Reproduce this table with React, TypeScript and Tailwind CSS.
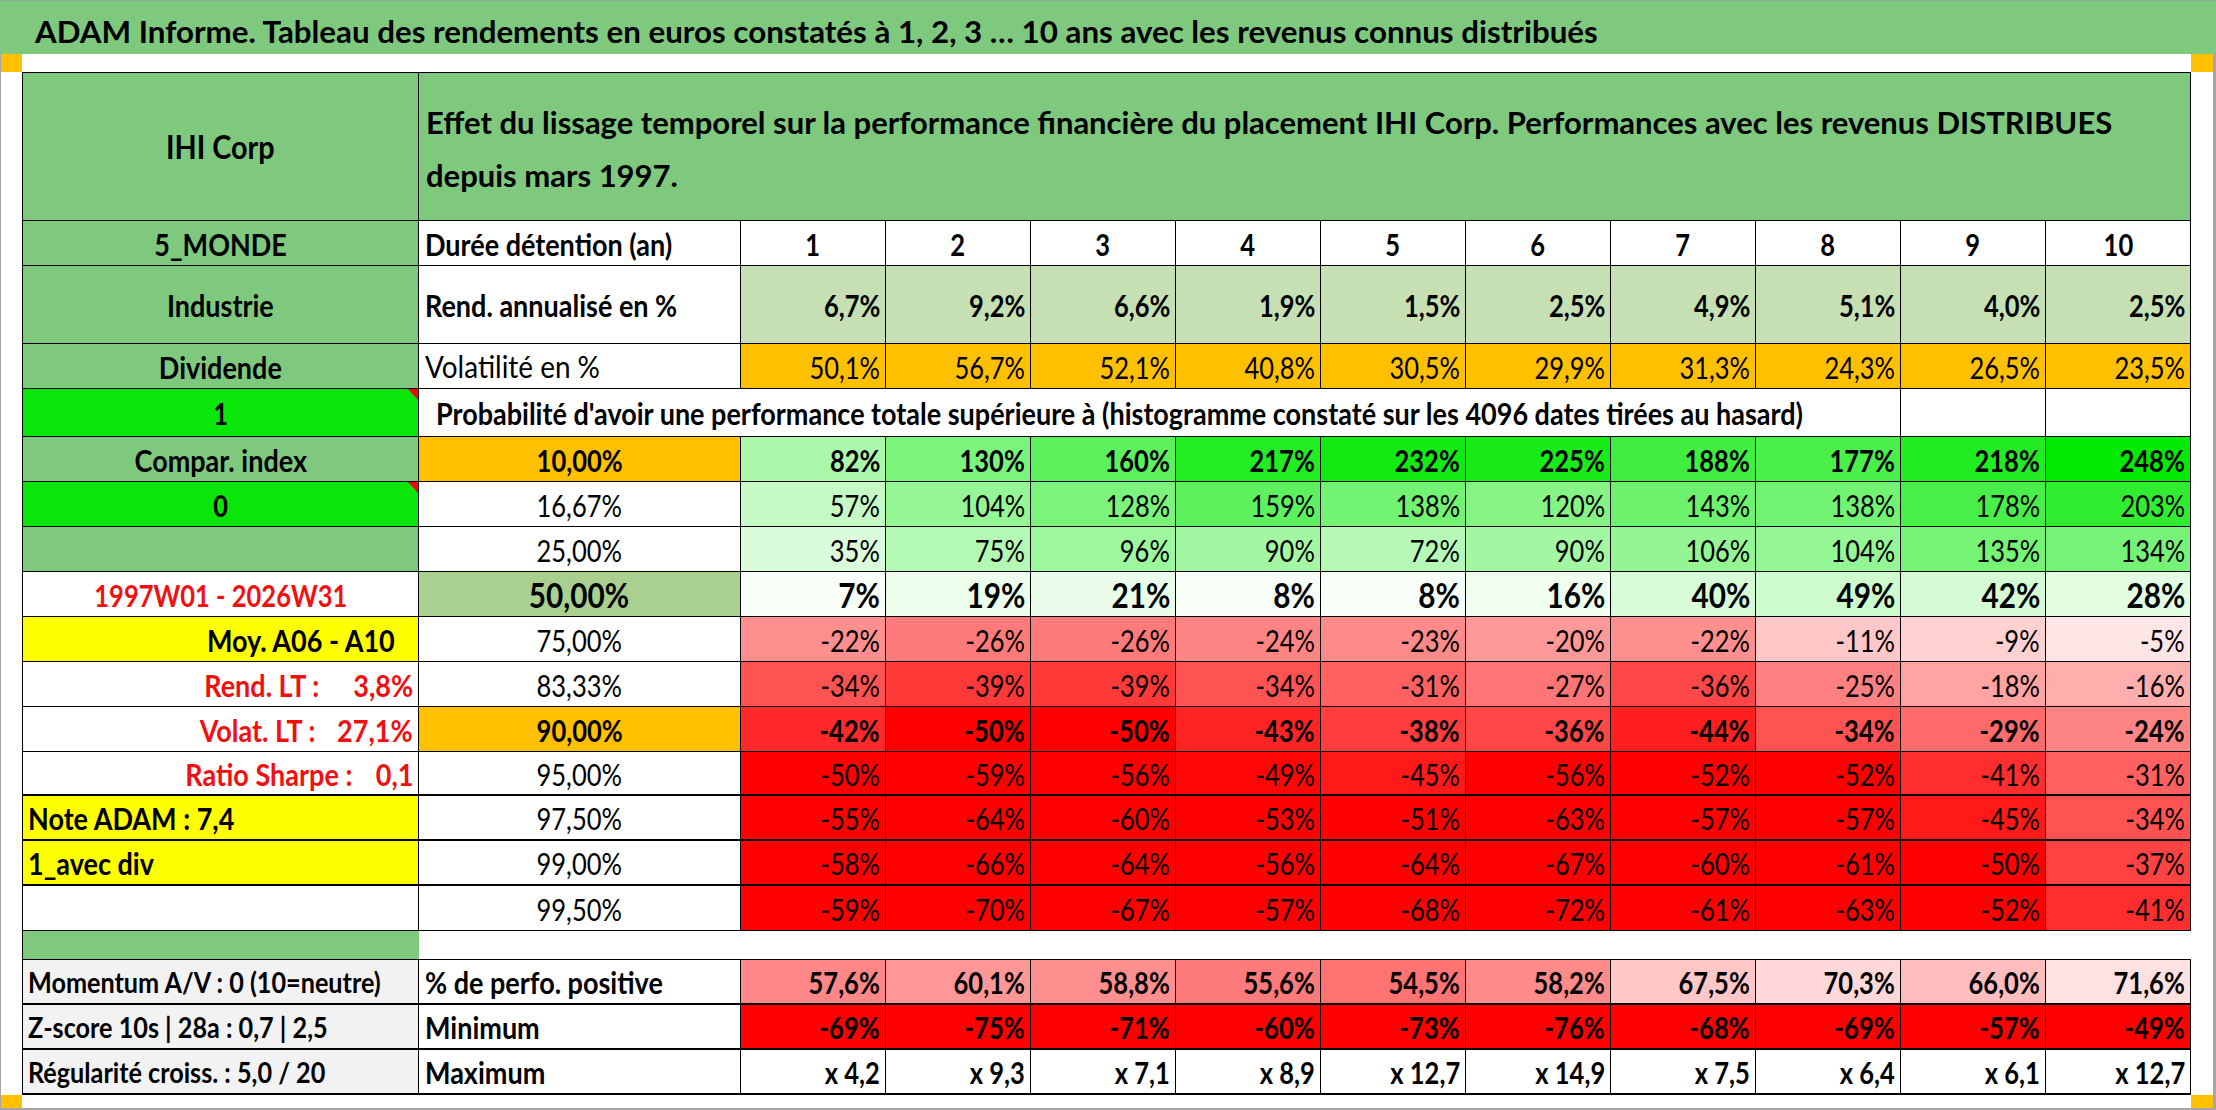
import React from "react";

const GRID = "grid grid-cols-[396px_322px_repeat(10,minmax(0,1fr))]";

type Align = "l" | "r" | "c";
type Sc = "lab" | "num" | "none";

function Txt({ a, s = "num", className = "", children }: { a: Align; s?: Sc; className?: string; children: React.ReactNode }) {
  const o = a === "l" ? "origin-left" : a === "r" ? "origin-right" : "origin-center";
  const sc = s === "lab" ? "scale-x-[0.9]" : s === "num" ? "scale-x-[0.85]" : "";
  return <span className={`inline-block whitespace-pre ${sc} ${o} ${className}`}>{children}</span>;
}

function Cell({
  a = "r",
  s = "num",
  bg = "",
  thick = false,
  noR = false,
  className = "",
  style,
  children,
  flag = false,
}: {
  a?: Align;
  s?: Sc;
  bg?: string;
  thick?: boolean;
  noR?: boolean;
  className?: string;
  style?: React.CSSProperties;
  children?: React.ReactNode;
  flag?: boolean;
}) {
  const j = a === "l" ? "justify-start pl-[6px]" : a === "r" ? "justify-end pr-[5px]" : "justify-center";
  return (
    <div
      className={`relative flex items-center pt-[1px] leading-none border-black ${thick ? "border-b-2" : "border-b"} ${noR ? "" : "border-r"} ${j} ${bg} ${className}`}
      style={style}
    >
      {children !== undefined && (
        <Txt a={a} s={s}>
          {children}
        </Txt>
      )}
      {flag && <Flag />}
    </div>
  );
}

function Flag() {
  return <div className="absolute top-0 right-0 w-0 h-0 border-l-[10px] border-l-transparent border-t-[11px] border-t-[#ff0000]" />;
}

function green(v: number) {
  const t = Math.min(1, Math.max(0, v / 250));
  const rb = Math.round(255 * (1 - t));
  const g = Math.round(255 - 22 * t);
  return `rgb(${rb},${g},${rb})`;
}
function red(v: number) {
  const t = Math.min(1, Math.abs(v) / 50);
  const gb = Math.round(255 * (1 - t));
  return `rgb(255,${gb},${gb})`;
}
function scaleColor(v: number) {
  return v >= 0 ? green(v) : red(v);
}
function posColor(v: number) {
  const gb = Math.max(0, Math.min(255, Math.round(115 + (v - 54.5) * 6.43)));
  return `rgb(255,${gb},${gb})`;
}

const rend = ["6,7%", "9,2%", "6,6%", "1,9%", "1,5%", "2,5%", "4,9%", "5,1%", "4,0%", "2,5%"];
const vol = ["50,1%", "56,7%", "52,1%", "40,8%", "30,5%", "29,9%", "31,3%", "24,3%", "26,5%", "23,5%"];
const p10 = [82, 130, 160, 217, 232, 225, 188, 177, 218, 248];
const p16 = [57, 104, 128, 159, 138, 120, 143, 138, 178, 203];
const p25 = [35, 75, 96, 90, 72, 90, 106, 104, 135, 134];
const p50 = [7, 19, 21, 8, 8, 16, 40, 49, 42, 28];
const p75 = [-22, -26, -26, -24, -23, -20, -22, -11, -9, -5];
const p83 = [-34, -39, -39, -34, -31, -27, -36, -25, -18, -16];
const p90 = [-42, -50, -50, -43, -38, -36, -44, -34, -29, -24];
const p95 = [-50, -59, -56, -49, -45, -56, -52, -52, -41, -31];
const p975 = [-55, -64, -60, -53, -51, -63, -57, -57, -45, -34];
const p99 = [-58, -66, -64, -56, -64, -67, -60, -61, -50, -37];
const p995 = [-59, -70, -67, -57, -68, -72, -61, -63, -52, -41];
const pos = [57.6, 60.1, 58.8, 55.6, 54.5, 58.2, 67.5, 70.3, 66.0, 71.6];
const mins = [-69, -75, -71, -60, -73, -76, -68, -69, -57, -49];
const maxs = ["x 4,2", "x 9,3", "x 7,1", "x 8,9", "x 12,7", "x 14,9", "x 7,5", "x 6,4", "x 6,1", "x 12,7"];

function ScaleCells({ vals, thick = false, bold = false, big = false }: { vals: number[]; thick?: boolean; bold?: boolean; big?: boolean }) {
  return (
    <>
      {vals.map((v, i) => (
        <Cell
          key={i}
          thick={thick}
          className={`${big ? "text-[35px]" : "text-[30px]"} ${bold ? "font-bold" : "font-normal"}`}
          style={{ backgroundColor: scaleColor(v) }}
        >
          {`${v}%`}
        </Cell>
      ))}
    </>
  );
}

export default function App() {
  return (
    <div className="w-[2216px] h-[1110px] overflow-hidden bg-white font-['Lato',sans-serif] text-black">
      <div className="h-[54px] bg-[#7fc97f] flex items-center pl-[35px] pt-[8px] border-t border-[#8fae8f]">
        <Txt a="l" s="none" className="text-[31.3px] font-bold leading-none">
          ADAM Informe. Tableau des rendements en euros constatés à 1, 2, 3 … 10 ans avec les revenus connus distribués
        </Txt>
      </div>
      <div className="h-[1056px] flex border-l border-r-[3px] border-b-2 border-[#a6a6a6]">
        <div className="w-[21px] flex flex-col justify-between">
          <div className="h-[18px] bg-[#ffc000]" />
          <div className="h-[13px] bg-[#ffc000]" />
        </div>
        <div className="w-[2169px] pt-[18px]">
          <div className="border-t border-l border-black">
            {/* header */}
            <div className={`${GRID} h-[148px]`}>
              <Cell a="c" s="lab" bg="bg-[#7fc97f]" className="text-[32px] font-bold">
                IHI Corp
              </Cell>
              <div className="col-span-11 bg-[#7fc97f] border-r border-b border-black flex flex-col justify-center pl-[7px] pt-[4px] leading-[53px] text-[31px] font-bold">
                <div>
                  <Txt a="l" s="none">
                    Effet du lissage temporel sur la performance financière du placement IHI Corp. Performances avec les revenus DISTRIBUES
                  </Txt>
                </div>
                <div>
                  <Txt a="l" s="none">
                    depuis mars 1997.
                  </Txt>
                </div>
              </div>
            </div>

            {/* 5_MONDE */}
            <div className={`${GRID} h-[45px]`}>
              <Cell a="c" s="lab" bg="bg-[#7fc97f]" className="text-[30px] font-bold">
                5_MONDE
              </Cell>
              <Cell a="l" s="lab" className="text-[30px] font-bold">
                Durée détention (an)
              </Cell>
              {[1, 2, 3, 4, 5, 6, 7, 8, 9, 10].map((n) => (
                <Cell key={n} a="c" className="text-[30px] font-bold">
                  {String(n)}
                </Cell>
              ))}
            </div>

            {/* Industrie */}
            <div className={`${GRID} h-[78px]`}>
              <Cell a="c" s="lab" bg="bg-[#7fc97f]" className="text-[30px] font-bold">
                Industrie
              </Cell>
              <Cell a="l" s="lab" className="text-[30px] font-bold">
                Rend. annualisé en %
              </Cell>
              {rend.map((r, i) => (
                <Cell key={i} bg="bg-[#c6e0b4]" className="text-[30px] font-bold">
                  {r}
                </Cell>
              ))}
            </div>

            {/* Dividende */}
            <div className={`${GRID} h-[45px]`}>
              <Cell a="c" s="lab" bg="bg-[#7fc97f]" className="text-[30px] font-bold">
                Dividende
              </Cell>
              <Cell a="l" s="lab" className="text-[31px] font-normal">
                Volatilité en %
              </Cell>
              {vol.map((r, i) => (
                <Cell key={i} bg="bg-[#ffc000]" className="text-[30px] font-normal">
                  {r}
                </Cell>
              ))}
            </div>

            {/* 1 / Probabilité */}
            <div className={`${GRID} h-[48px]`}>
              <Cell a="c" bg="bg-[#0ae60a]" className="text-[30px] font-bold" flag>
                1
              </Cell>
              <div className="col-span-9 flex items-center pl-[17px] pt-[1px] border-b border-r border-black text-[30px] font-bold leading-none">
                <Txt a="l" s="lab">
                  Probabilité d'avoir une performance totale supérieure à (histogramme constaté sur les 4096 dates tirées au hasard)
                </Txt>
              </div>
              <Cell />
              <Cell />
            </div>

            {/* Compar index */}
            <div className={`${GRID} h-[45px]`}>
              <Cell a="c" s="lab" bg="bg-[#7fc97f]" className="text-[30px] font-bold">
                Compar. index
              </Cell>
              <Cell a="c" bg="bg-[#ffc000]" className="text-[30px] font-bold">
                10,00%
              </Cell>
              <ScaleCells vals={p10} bold />
            </div>

            {/* 0 */}
            <div className={`${GRID} h-[45px]`}>
              <Cell a="c" bg="bg-[#0ae60a]" className="text-[30px] font-bold" flag>
                0
              </Cell>
              <Cell a="c" className="text-[30px] font-normal">
                16,67%
              </Cell>
              <ScaleCells vals={p16} />
            </div>

            {/* blank green */}
            <div className={`${GRID} h-[45px]`}>
              <Cell a="c" bg="bg-[#7fc97f]" />
              <Cell a="c" className="text-[30px] font-normal">
                25,00%
              </Cell>
              <ScaleCells vals={p25} />
            </div>

            {/* 1997 */}
            <div className={`${GRID} h-[45px]`}>
              <Cell a="c" className="text-[30px] font-bold text-[#f01010]">
                1997W01 - 2026W31
              </Cell>
              <Cell a="c" bg="bg-[#a9d08e]" className="text-[35px] font-bold">
                50,00%
              </Cell>
              <ScaleCells vals={p50} bold big />
            </div>

            {/* Moy */}
            <div className={`${GRID} h-[45px]`}>
              <Cell a="r" s="lab" bg="bg-[#ffff00]" className="text-[30px] font-bold !pr-[23px]">
                Moy. A06 - A10
              </Cell>
              <Cell a="c" className="text-[30px] font-normal">
                75,00%
              </Cell>
              <ScaleCells vals={p75} />
            </div>

            {/* Rend LT */}
            <div className={`${GRID} h-[45px]`}>
              <Cell a="r" s="lab" className="text-[30px] font-bold text-[#f01010]">
                <>
                  Rend. LT :<span className="inline-block w-[38px]" />3,8%
                </>
              </Cell>
              <Cell a="c" className="text-[30px] font-normal">
                83,33%
              </Cell>
              <ScaleCells vals={p83} />
            </div>

            {/* Volat LT */}
            <div className={`${GRID} h-[45px]`}>
              <Cell a="r" s="lab" className="text-[30px] font-bold text-[#f01010]">
                <>
                  Volat. LT :<span className="inline-block w-[24px]" />27,1%
                </>
              </Cell>
              <Cell a="c" bg="bg-[#ffc000]" className="text-[30px] font-bold">
                90,00%
              </Cell>
              <ScaleCells vals={p90} bold />
            </div>

            {/* Ratio Sharpe */}
            <div className={`${GRID} h-[44px]`}>
              <Cell a="r" s="lab" thick className="text-[30px] font-bold text-[#f01010]">
                <>
                  Ratio Sharpe :<span className="inline-block w-[26px]" />0,1
                </>
              </Cell>
              <Cell a="c" thick className="text-[30px] font-normal">
                95,00%
              </Cell>
              <ScaleCells vals={p95} thick />
            </div>

            {/* Note ADAM */}
            <div className={`${GRID} h-[45px]`}>
              <Cell a="l" s="lab" thick bg="bg-[#ffff00]" className="text-[30px] font-bold !pl-[5px]">
                Note ADAM : 7,4
              </Cell>
              <Cell a="c" thick className="text-[30px] font-normal">
                97,50%
              </Cell>
              <ScaleCells vals={p975} thick />
            </div>

            {/* 1_avec div */}
            <div className={`${GRID} h-[45px]`}>
              <Cell a="l" s="lab" thick bg="bg-[#ffff00]" className="text-[30px] font-bold !pl-[5px]">
                1_avec div
              </Cell>
              <Cell a="c" thick className="text-[30px] font-normal">
                99,00%
              </Cell>
              <ScaleCells vals={p99} thick />
            </div>

            {/* blank */}
            <div className={`${GRID} h-[45px]`}>
              <Cell a="c" />
              <Cell a="c" className="text-[30px] font-normal">
                99,50%
              </Cell>
              <ScaleCells vals={p995} />
            </div>

            {/* gap */}
            <div className={`${GRID} h-[29px]`}>
              <div className="bg-[#7fc97f] border-b border-black" />
              <div className="col-span-11 border-b border-black" />
            </div>

            {/* Momentum */}
            <div className={`${GRID} h-[45px]`}>
              <Cell a="l" s="lab" thick bg="bg-[#f2f2f2]" className="text-[28px] font-bold !pl-[5px]">
                Momentum A/V : 0 (10=neutre)
              </Cell>
              <Cell a="l" s="lab" thick className="text-[30px] font-bold">
                % de perfo. positive
              </Cell>
              {pos.map((v, i) => (
                <Cell key={i} thick className="text-[30px] font-bold" style={{ backgroundColor: posColor(v) }}>
                  {`${v.toFixed(1).replace(".", ",")}%`}
                </Cell>
              ))}
            </div>

            {/* Z-score */}
            <div className={`${GRID} h-[45px]`}>
              <Cell a="l" s="lab" thick bg="bg-[#f2f2f2]" className="text-[28px] font-bold !pl-[5px]">
                Z-score 10s | 28a : 0,7 | 2,5
              </Cell>
              <Cell a="l" s="lab" thick className="text-[30px] font-bold">
                Minimum
              </Cell>
              {mins.map((v, i) => (
                <Cell key={i} thick className="text-[30px] font-bold" style={{ backgroundColor: red(v * 1.08) }}>
                  {`${v}%`}
                </Cell>
              ))}
            </div>

            {/* Maximum */}
            <div className={`${GRID} h-[45px]`}>
              <Cell a="l" s="lab" thick bg="bg-[#f2f2f2]" className="text-[28px] font-bold !pl-[5px]">
                Régularité croiss. : 5,0 / 20
              </Cell>
              <Cell a="l" s="lab" thick className="text-[30px] font-bold">
                Maximum
              </Cell>
              {maxs.map((v, i) => (
                <Cell key={i} thick className="text-[30px] font-bold">
                  {v}
                </Cell>
              ))}
            </div>
          </div>
        </div>
        <div className="w-[22px] flex flex-col justify-between">
          <div className="h-[18px] bg-[#ffc000]" />
          <div className="h-[13px] bg-[#ffc000]" />
        </div>
      </div>
    </div>
  );
}
